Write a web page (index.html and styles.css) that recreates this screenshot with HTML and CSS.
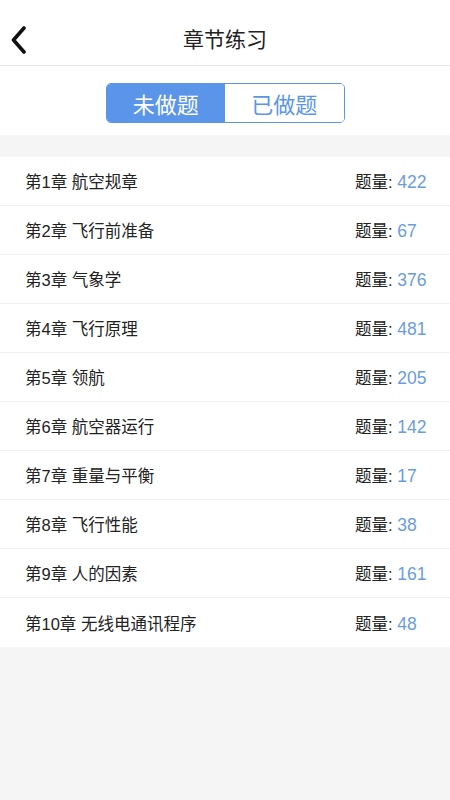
FILE: index.html
```html
<!DOCTYPE html>
<html lang="zh-CN">
<head>
    <meta charset="UTF-8">
    <meta name="viewport" content="width=device-width, initial-scale=1.0">
    <title>章节练习</title>
    <link rel="stylesheet" href="styles.css">
</head>
<body>
    <div class="header">
        <span class="back">
            <svg width="18" height="28" viewBox="0 0 18 28"><path d="M14 2 L3.5 14 L14 26" fill="none" stroke="#111" stroke-width="3.6" stroke-linecap="round" stroke-linejoin="round"/></svg>
        </span>
        <div class="title">章节练习</div>
    </div>

    <div class="tabs-wrap">
        <div class="tabs">
            <div class="tab active">未做题</div>
            <div class="tab">已做题</div>
        </div>
    </div>

    <div class="list">
        <div class="row"><span class="name">第1章 航空规章</span><span class="count">题量: <em>422</em></span></div>
        <div class="row"><span class="name">第2章 飞行前准备</span><span class="count">题量: <em>67</em></span></div>
        <div class="row"><span class="name">第3章 气象学</span><span class="count">题量: <em>376</em></span></div>
        <div class="row"><span class="name">第4章 飞行原理</span><span class="count">题量: <em>481</em></span></div>
        <div class="row"><span class="name">第5章 领航</span><span class="count">题量: <em>205</em></span></div>
        <div class="row"><span class="name">第6章 航空器运行</span><span class="count">题量: <em>142</em></span></div>
        <div class="row"><span class="name">第7章 重量与平衡</span><span class="count">题量: <em>17</em></span></div>
        <div class="row"><span class="name">第8章 飞行性能</span><span class="count">题量: <em>38</em></span></div>
        <div class="row"><span class="name">第9章 人的因素</span><span class="count">题量: <em>161</em></span></div>
        <div class="row"><span class="name">第10章 无线电通讯程序</span><span class="count">题量: <em>48</em></span></div>
    </div>
</body>
</html>
```

FILE: styles.css
```css
html, body {
    margin: 0;
    height: 100%;
}
body {
    font-family: "Liberation Sans", "Noto Sans CJK SC", sans-serif;
    background-color: #f5f5f5;
    color: #222;
}
.header {
    height: 65px;
    background-color: #fff;
    border-bottom: 1px solid #e8e8e8;
    display: flex;
    justify-content: center;
    position: relative;
}
.back {
    position: absolute;
    left: 10px;
    top: 26px;
    line-height: 0;
}
.title {
    font-size: 21px;
    line-height: 30px;
    margin-top: 25px;
}
.tabs-wrap {
    background-color: #fff;
    height: 69px;
    display: flex;
    justify-content: center;
    padding-top: 17px;
    box-sizing: border-box;
}
.tabs {
    display: flex;
    width: 239px;
    height: 40px;
    border: 1px solid #5b95ea;
    border-radius: 5px;
    overflow: hidden;
    box-sizing: border-box;
}
.tab {
    flex: 1;
    display: flex;
    align-items: center;
    justify-content: center;
    font-size: 22px;
    color: #5b95ea;
    background-color: #fff;
}
.tab.active {
    background-color: #5b95ea;
    color: #fff;
}
.list {
    margin-top: 22px;
    background-color: #fff;
}
.row {
    height: 49px;
    display: flex;
    align-items: center;
    justify-content: space-between;
    padding-left: 25px;
    border-bottom: 1px solid #f0f0f0;
    box-sizing: border-box;
    font-size: 16.5px;
}
.row:last-child {
    border-bottom: none;
}
.count {
    width: 95px;
}
.count em {
    font-style: normal;
    font-size: 17.5px;
    color: #6a9ce0;
}
```
